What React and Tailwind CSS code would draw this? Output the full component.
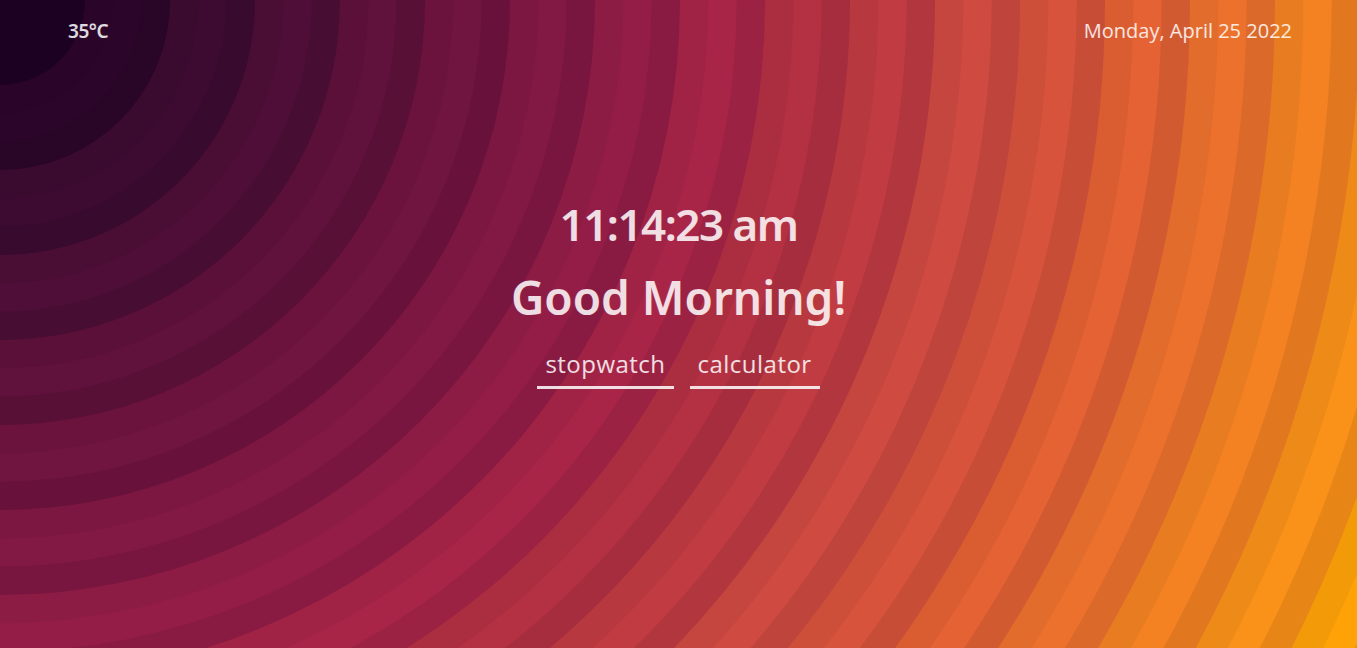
import React from "react";

// base colour of each 85px band, from the centre (top-left) outwards
const BANDS = [
  "#1c0122", "#2a0529", "#3a0a2f", "#4a0d34", "#5b1039", "#6b133d",
  "#7c1741", "#8d1c44", "#a02345", "#ab2e40", "#b8383f", "#c5463e",
  "#cd4f39", "#d95d31", "#e16c2b", "#e87c21", "#ee8a18", "#f39a08",
  "#f9a200", "#fca800",
];

const shade = (hex, k) => {
  const n = parseInt(hex.slice(1), 16);
  const c = [(n >> 16) & 255, (n >> 8) & 255, n & 255].map((v) =>
    Math.max(0, Math.min(255, Math.round(v * k)))
  );
  return `rgb(${c[0]},${c[1]},${c[2]})`;
};

const Rings = () => {
  const step = 85 / 3;
  const rings = [];
  BANDS.forEach((base, i) => {
    [1, 1.05, 0.97].forEach((k, j) => {
      rings.push({ r: (i * 3 + j + 1) * step, fill: shade(base, k) });
    });
  });
  // first band is flat
  rings[0].fill = rings[1].fill = rings[2].fill = BANDS[0];
  return (
    <svg className="absolute inset-0 w-full h-full" aria-hidden="true">
      {rings
        .slice()
        .reverse()
        .map((ring) => (
          <circle key={ring.r} cx="0" cy="0" r={ring.r} fill={ring.fill} />
        ))}
    </svg>
  );
};

const NavLink = ({ children }) => (
  <a
    href="#"
    className="px-2 pb-[10px] border-b-[3px] border-white/85 text-[24px] leading-none tracking-[0.02em]"
  >
    {children}
  </a>
);

const heading = { fontFamily: '"Noto Sans", sans-serif' };

export default function App() {
  return (
    <div
      className="relative w-full h-screen overflow-hidden bg-[#1c0122] text-white/85"
      style={{ fontFamily: '"Open Sans", sans-serif' }}
    >
      <Rings />
      <div className="relative flex flex-col h-full">
        <header className="flex items-center justify-between pl-[68px] pr-[65px] pt-[16px]">
          <span className="text-[19px] font-semibold tracking-tight" style={heading}>
            35°C
          </span>
          <span className="text-[20px]">Monday, April 25 2022</span>
        </header>

        <main className="flex flex-col items-center mt-[156px]">
          <h1 className="text-[44px] font-semibold leading-none tracking-[-0.035em]" style={heading}>
            11:14:23 am
          </h1>
          <h2 className="mt-[28px] text-[46px] font-semibold leading-none" style={heading}>
            Good Morning!
          </h2>
          <nav className="flex gap-4 mt-[32px]">
            <NavLink>stopwatch</NavLink>
            <NavLink>calculator</NavLink>
          </nav>
        </main>
      </div>
    </div>
  );
}
